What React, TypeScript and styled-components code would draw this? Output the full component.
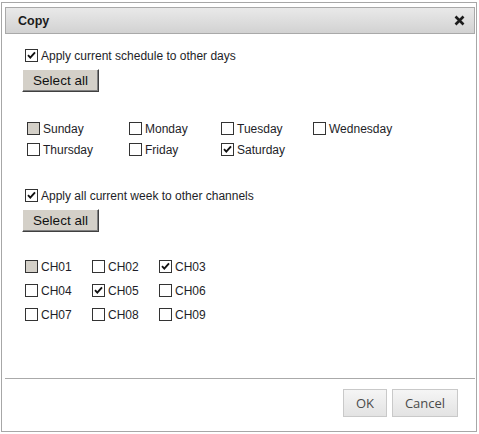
import React from 'react';
import styled, { createGlobalStyle } from 'styled-components';

const GlobalStyle = createGlobalStyle`
  html, body {
    margin: 0;
    padding: 0;
    background: #ffffff;
  }
  body {
    font-family: "Liberation Sans", Arial, sans-serif;
    color: #1e1e28;
  }
`;

const Page = styled.div`
  padding: 2px 0 0 1px;
`;

const Dialog = styled.div`
  box-sizing: border-box;
  width: 476px;
  height: 430px;
  border: 1px solid #a7a7a7;
  background: #ffffff;
  padding: 4px 1px 0 3px;
  display: flex;
  flex-direction: column;
`;

const TitleBar = styled.div`
  box-sizing: border-box;
  height: 27px;
  border: 1px solid #a9a9a9;
  background: linear-gradient(#e9e9e9, #d2d2d2);
  display: flex;
  align-items: center;
  justify-content: space-between;
  padding: 0 9px 0 12px;
`;

const Title = styled.span`
  font-weight: bold;
  font-size: 12.5px;
  color: #1a1a1a;
`;

const CloseButton = styled.button`
  border: none;
  background: transparent;
  padding: 0;
  width: 11px;
  height: 11px;
  display: flex;
  cursor: pointer;
`;

const Content = styled.div`
  flex: 1;
  padding: 14px 0 0 17px;
  display: flex;
  flex-direction: column;
  align-items: flex-start;
`;

const CheckRow = styled.label`
  display: flex;
  align-items: center;
  height: 15px;
  padding-left: 3px;
  font-size: 12px;
  white-space: nowrap;
`;

const Box = styled.span<{ $disabled?: boolean }>`
  box-sizing: border-box;
  width: 13px;
  height: 13px;
  border: 1px solid #333333;
  background: ${p => (p.$disabled ? '#d4d0c8' : '#ffffff')};
  margin-right: 3px;
  display: flex;
  align-items: center;
  justify-content: center;
  flex-shrink: 0;
`;

const LegacyButton = styled.button<{ $top: number }>`
  box-sizing: border-box;
  margin-top: ${p => p.$top}px;
  width: 77px;
  height: 23px;
  padding: 0;
  background: #d4d0c8;
  border: 1px solid;
  border-color: #ffffff #404040 #404040 #ffffff;
  box-shadow: inset -1px -1px #808080;
  font-family: "Liberation Sans", Arial, sans-serif;
  font-size: 13.5px;
  color: #111111;
`;

const Grid = styled.div<{ $cols: string; $rowGap: number; $top: number; $left: number }>`
  display: grid;
  grid-template-columns: ${p => p.$cols};
  row-gap: ${p => p.$rowGap}px;
  margin-top: ${p => p.$top}px;
  padding-left: ${p => p.$left}px;
  & > label {
    padding-left: 0;
  }
`;

const Spaced = styled.div<{ $top: number }>`
  margin-top: ${p => p.$top}px;
`;

const Footer = styled.div`
  border-top: 1px solid #aaaaaa;
  height: 53px;
  box-sizing: border-box;
  padding: 10px 17px 0 0;
  display: flex;
  justify-content: flex-end;
  gap: 5px;
`;

const FooterButton = styled.button<{ $w: number }>`
  box-sizing: border-box;
  width: ${p => p.$w}px;
  height: 28px;
  padding: 0;
  border: 1px solid #c9c9c9;
  background: linear-gradient(#f5f5f5, #e3e3e3);
  font-family: "Open Sans", "Liberation Sans", sans-serif;
  font-size: 13px;
  color: #4a4a4a;
`;

const Tick = () => (
  <svg width="11" height="11" viewBox="0 0 11 11">
    <path d="M2 5.2 L4.3 7.6 L9 2.4" fill="none" stroke="#111" strokeWidth="1.9" />
  </svg>
);

const Check: React.FC<{ label: string; checked?: boolean; disabled?: boolean }> = ({
  label,
  checked,
  disabled,
}) => (
  <CheckRow>
    <Box $disabled={disabled}>{checked && <Tick />}</Box>
    {label}
  </CheckRow>
);

const days: [string, boolean, boolean][] = [
  ['Sunday', false, true],
  ['Monday', false, false],
  ['Tuesday', false, false],
  ['Wednesday', false, false],
  ['Thursday', false, false],
  ['Friday', false, false],
  ['Saturday', true, false],
];

const channels = ['CH01', 'CH02', 'CH03', 'CH04', 'CH05', 'CH06', 'CH07', 'CH08', 'CH09'];
const checkedChannels = ['CH03', 'CH05'];

export default function App() {
  return (
    <>
      <GlobalStyle />
      <Page>
        <Dialog>
          <TitleBar>
            <Title>Copy</Title>
            <CloseButton aria-label="close">
              <svg width="11" height="11" viewBox="0 0 11 11">
                <path d="M1.5 1.5 L9.5 9.5 M9.5 1.5 L1.5 9.5" stroke="#1c1c1c" strokeWidth="2.6" />
              </svg>
            </CloseButton>
          </TitleBar>
          <Content>
            <Check label="Apply current schedule to other days" checked />
            <LegacyButton $top={6}>Select all</LegacyButton>
            <Grid $cols="102px 92px 92px auto" $rowGap={6} $top={29} $left={5}>
              {days.map(([d, c, dis]) => (
                <Check key={d} label={d} checked={c} disabled={dis} />
              ))}
            </Grid>
            <Spaced $top={31}>
              <Check label="Apply all current week to other channels" checked />
            </Spaced>
            <LegacyButton $top={6}>Select all</LegacyButton>
            <Grid $cols="67px 67px auto" $rowGap={9} $top={27} $left={3}>
              {channels.map(ch => (
                <Check
                  key={ch}
                  label={ch}
                  checked={checkedChannels.includes(ch)}
                  disabled={ch === 'CH01'}
                />
              ))}
            </Grid>
          </Content>
          <Footer>
            <FooterButton $w={44}>OK</FooterButton>
            <FooterButton $w={66}>Cancel</FooterButton>
          </Footer>
        </Dialog>
      </Page>
    </>
  );
}
